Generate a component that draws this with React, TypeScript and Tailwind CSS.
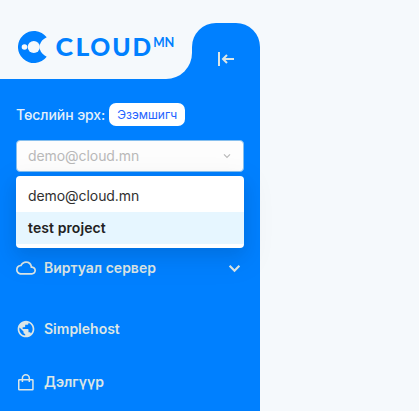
import type { ReactNode } from "react";
import { MdCloudQueue, MdPublic } from "react-icons/md";

function Logo() {
  return (
    <svg width="160" height="36" viewBox="0 0 160 36" className="block fill-[#0080ff]" aria-label="Cloud MN">
      <path d="M28.7 8.3A16 16 0 1 0 28.7 27.7L26.3 26.2Q23.6 24.4 22.8 22.5Q20.2 18 22.8 13.5Q23.6 11.6 26.3 9.8Z" />
      <circle cx="15.8" cy="18" r="6.1" fill="#f5f9fc" />
      <circle cx="6.5" cy="18" r="2.8" fill="#f5f9fc" />
      <g className="font-['Lato'] text-[24px] font-black">
        <text x="37.4" y="26.5" textLength="17.6" lengthAdjust="spacingAndGlyphs">C</text>
        <text x="57.6" y="26.5" textLength="13.8" lengthAdjust="spacingAndGlyphs">L</text>
        <text x="72.3" y="26.5" textLength="20" lengthAdjust="spacingAndGlyphs">O</text>
        <text x="94.2" y="26.5" textLength="18.4" lengthAdjust="spacingAndGlyphs">U</text>
        <text x="114.5" y="26.5" textLength="18.6" lengthAdjust="spacingAndGlyphs">D</text>
      </g>
      <g className="font-['Lato'] text-[12.5px] font-bold">
        <text x="135.2" y="17.6" textLength="11.4" lengthAdjust="spacingAndGlyphs">M</text>
        <text x="146.6" y="17.6" textLength="9.8" lengthAdjust="spacingAndGlyphs">N</text>
      </g>
    </svg>
  );
}

function Chevron({ size, width }: { size: number; width: number }) {
  return (
    <svg width={size} height={size} viewBox="0 0 12 12" fill="none" stroke="currentColor" strokeWidth={width}>
      <path d="M1.5 3.5 6 8l4.5-4.5" />
    </svg>
  );
}

function BagIcon() {
  return (
    <svg width="20" height="20" viewBox="0 0 20 20" fill="none" stroke="currentColor" strokeWidth="1.5">
      <rect x="2.75" y="7.75" width="14.2" height="10" rx=".6" />
      <path d="M6.4 10V6.2a3.45 3.45 0 0 1 6.9 0V10" />
    </svg>
  );
}

function NavItem({ icon, label, end }: { icon: ReactNode; label: string; end?: ReactNode }) {
  return (
    <div className="flex h-6 items-center gap-2 text-[#dce6e6]">
      <span className="w-5">{icon}</span>
      <span className="text-sm font-semibold">{label}</span>
      {end && <span className="ml-auto mr-[3px]">{end}</span>}
    </div>
  );
}

export default function App() {
  return (
    <div className="h-[411px] w-[419px] overflow-hidden bg-[#f5f9fc] font-['Inter',sans-serif]">
      <aside className="w-[260px]">
        <header className="flex h-[79px]">
          <div className="w-[192px] bg-[#0080ff]">
            <div className="h-full rounded-br-[26px] bg-[#f5f9fc] pl-[18px] pt-[29px]">
              <Logo />
            </div>
          </div>
          <div className="mt-[23px] flex w-[68px] justify-center rounded-t-[24px] bg-[#0080ff] pt-[28px] text-[#dce6e6]">
            <svg width="18" height="16" viewBox="0 0 18 16" fill="none" stroke="currentColor" strokeWidth="2">
              <path d="M2 1v14M17 8H6M10 4 6 8l4 4" />
            </svg>
          </div>
        </header>
        <div className="h-[332px] bg-[#0080ff] px-4 pt-6">
          <div className="flex items-center gap-1">
            <span className="text-sm font-medium tracking-[-0.08px] text-[#e4f0fa]">Төслийн эрх:</span>
            <span className="flex h-[23px] items-center rounded-[7px] bg-white px-2 text-xs text-[#2563ff]">Эзэмшигч</span>
          </div>
          <div className="relative mt-3.5">
            <div className="flex h-8 items-center justify-between rounded border border-[#86bfee] bg-[#fdfdfd] pl-[11px] pr-3 text-sm tracking-[-0.07px] text-[#b9b9b9]">
              <span>demo@cloud.mn</span>
              <Chevron size={8} width={1.8} />
            </div>
            <div className="absolute left-0 top-9 z-10 w-full rounded bg-white py-1 text-sm leading-8 text-[#303030] shadow-[0_6px_16px_rgba(0,0,0,0.08),0_9px_28px_8px_rgba(0,0,0,0.05)]">
              <div className="px-3 tracking-[-0.07px]">demo@cloud.mn</div>
              <div className="bg-[#e6f6ff] px-3 font-semibold tracking-[0.08px] text-[#222]">test project</div>
            </div>
          </div>
          <nav className="pt-[84px]">
            <NavItem icon={<MdCloudQueue size={20} />} label="Виртуал сервер" end={<Chevron size={13} width={2} />} />
            <div className="mt-[37px]">
              <NavItem icon={<MdPublic size={20} />} label="Simplehost" />
            </div>
            <div className="mt-[29px]">
              <NavItem icon={<BagIcon />} label="Дэлгүүр" />
            </div>
          </nav>
        </div>
      </aside>
    </div>
  );
}
